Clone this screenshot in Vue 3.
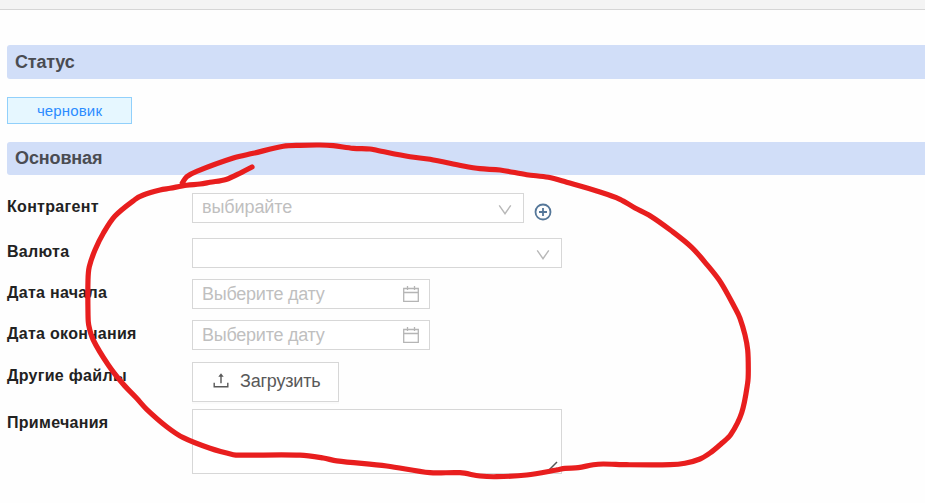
<script setup>
const strokePoints = [
  [252, 167], [241.7, 172.3], [226, 179.5], [210, 182.3], [200, 184], [186.7, 185.3], [170, 188.3],
  [160, 190], [143.3, 195], [135, 199.5], [115, 216], [103.3, 233.3], [95, 250], [89.3, 266.7],
  [88, 280], [88, 313], [88.7, 325], [93.3, 340], [108.3, 365], [123.3, 384.3], [136.7, 398.3],
  [146.7, 409.3], [166.7, 426.7], [183.3, 437.7], [210, 448.3], [233.3, 454.7], [240, 455.2],
  [300, 455.2], [323.3, 458], [336.7, 460.9], [386.7, 466], [430, 472.7], [460, 472.7],
  [480, 476], [496.7, 476.7], [526.7, 475], [556.7, 470], [565, 468.3], [578.3, 467.7],
  [593.3, 464.7], [603.3, 464], [626.7, 464.7], [670, 464.7], [685, 463.3], [700, 459],
  [710, 453], [721.7, 443.3], [730.7, 434.7], [741.7, 412.7], [747.7, 382.7], [748.3, 370],
  [747.7, 350], [745, 335], [740, 318.3], [735.7, 309.3], [720.7, 282.3], [706.7, 264.3],
  [691.7, 247.3], [671.7, 231], [650, 215.7], [635, 208], [620, 199.3], [600, 192],
  [566.7, 182.3], [548.3, 177.3], [526.7, 174.7], [500, 170], [480, 168.7], [463.3, 166],
  [430, 159.3], [410, 156.7], [376.7, 150.3], [370, 149], [353.3, 148.3], [333.3, 145.7],
  [320, 145], [300, 145.3], [283.3, 146.3], [253.3, 153.3], [233.3, 158], [196.7, 171.3],
  [186.7, 176.7], [182.3, 183],
]

// Catmull-Rom spline through the points, written as cubic segments
function smooth(pts) {
  let d = `M${pts[0][0]} ${pts[0][1]}`
  for (let i = 0; i < pts.length - 1; i++) {
    const p0 = pts[i - 1] || pts[i]
    const p1 = pts[i]
    const p2 = pts[i + 1]
    const p3 = pts[i + 2] || p2
    const len = Math.hypot(p2[0] - p1[0], p2[1] - p1[1])
    const tangent = (a, b) => {
      const l = Math.hypot(b[0] - a[0], b[1] - a[1]) || 1
      return [((b[0] - a[0]) / l) * len * 0.33, ((b[1] - a[1]) / l) * len * 0.33]
    }
    const t1 = tangent(p0, p2)
    const t2 = tangent(p1, p3)
    d += `C${p1[0] + t1[0]} ${p1[1] + t1[1]} ${p2[0] - t2[0]} ${p2[1] - t2[1]} ${p2[0]} ${p2[1]}`
  }
  return d
}
const strokePath = smooth(strokePoints)
const dates = ['Дата начала', 'Дата окончания']
</script>

<template>
  <div class="page">
    <div class="topbar"></div>
    <main class="content">
      <h2 class="section">Статус</h2>
      <span class="tag">черновик</span>
      <h2 class="section main-section">Основная</h2>

      <div class="form">
        <div class="row first">
          <label>Контрагент</label>
          <div class="field select narrow">
            <span class="placeholder choose">выбирайте</span>
            <svg class="chevron" width="14" height="12" viewBox="0 0 14 12"><path d="M1.2 1.3 7 9.7l5.8-8.4" /></svg>
          </div>
          <svg class="plus" width="18" height="18" viewBox="0 0 18 18">
            <circle cx="9" cy="9" r="7.5" /><path d="M9 5v8M5 9h8" />
          </svg>
        </div>
        <div class="row second">
          <label>Валюта</label>
          <div class="field select wide">
            <svg class="chevron" width="14" height="12" viewBox="0 0 14 12"><path d="M1.2 1.3 7 9.7l5.8-8.4" /></svg>
          </div>
        </div>
        <div v-for="name in dates" :key="name" class="row date-row">
          <label>{{ name }}</label>
          <div class="field date">
            <span class="placeholder">Выберите дату</span>
            <svg class="calendar" width="16" height="16" viewBox="0 0 16 16">
              <path d="M.7 2.5h14.6v12.8H.7zM.7 6.5h14.6M4.5 0v4M11.5 0v4" />
            </svg>
          </div>
        </div>
        <div class="row upload-row">
          <label>Другие файлы</label>
          <button class="upload">
            <svg width="16" height="16" viewBox="0 0 16 16">
              <path d="M1.2 9.8v4h13.6v-4M8 10.3V2.2" /><path class="head" d="M8 .3 5.3 3.8h5.4z" />
            </svg>
            <span>Загрузить</span>
          </button>
        </div>
        <div class="row notes-row">
          <label>Примечания</label>
          <div class="field notes">
            <svg width="12" height="12" viewBox="0 0 12 12"><path d="M2 10 10 2M8 10l2-2" /></svg>
          </div>
        </div>
      </div>
    </main>
    <svg class="marker" width="925" height="503" viewBox="0 0 925 503"><path :d="strokePath" /></svg>
  </div>
</template>

<style>
body {
  margin: 0;
  background: #fefefe;
}
</style>

<style scoped>
.page {
  position: relative;
  box-sizing: border-box;
  height: 503px;
  overflow: hidden;
  background: #fefefe;
  font-family: "Liberation Sans", Arial, sans-serif;
}
.page * {
  box-sizing: border-box;
}
svg {
  fill: none;
  flex: none;
}
.topbar {
  height: 10px;
  background: #f4f4f4;
  border-bottom: 1px solid #d6d6d6;
}
.content {
  display: flex;
  flex-direction: column;
  align-items: flex-start;
  padding: 35px 0 0 7px;
}
.section {
  width: 100%;
  height: 34px;
  margin: 0;
  padding-left: 8px;
  border-radius: 3px 0 0 3px;
  background: #d1def8;
  color: #4a4c52;
  font-size: 18px;
  font-weight: 700;
  letter-spacing: -0.2px;
  line-height: 34px;
}
.main-section {
  height: 33px;
  letter-spacing: -0.12px;
  line-height: 33px;
}
.tag {
  width: 125px;
  height: 27px;
  margin: 18px 0;
  border: 1px solid #91d0fb;
  background: #e6f7ff;
  color: #2b8cff;
  font-size: 15px;
  letter-spacing: 0.15px;
  line-height: 26px;
  text-align: center;
}
.form {
  display: flex;
  flex-direction: column;
  padding-top: 18px;
}
.row {
  display: flex;
  align-items: flex-start;
}
.row label {
  width: 185px;
  flex: none;
  color: #222;
  font-size: 16px;
  font-weight: 700;
  letter-spacing: 0.3px;
  line-height: 28px;
  white-space: nowrap;
}
.field {
  display: flex;
  align-items: center;
  justify-content: flex-end;
  height: 30px;
  border: 1px solid #d7d7d7;
  background: #fff;
}
.placeholder {
  flex: 1;
  padding-left: 9px;
  color: #bfbfbf;
  font-size: 18px;
  letter-spacing: -0.25px;
  line-height: 28px;
  white-space: nowrap;
}
.placeholder.choose {
  padding-bottom: 2px;
  letter-spacing: -0.1px;
  line-height: 26px;
}
.narrow {
  width: 332px;
}
.wide {
  width: 370px;
}
.chevron {
  margin: 4px 11px 0 0;
  stroke: #b8b8b8;
  stroke-width: 1.4;
}
.plus {
  margin: 10px 0 0 10px;
  stroke: #557799;
  stroke-width: 1.8;
}
.second {
  margin-top: 15px;
}
.date-row {
  margin-top: 11px;
}
.date {
  width: 238px;
}
.calendar {
  margin-right: 10px;
  stroke: #b5b5b5;
  stroke-width: 1.3;
}
.upload-row {
  margin-top: 12px;
}
.upload {
  display: flex;
  align-items: center;
  gap: 11px;
  width: 147px;
  height: 40px;
  padding: 0 0 2px 20px;
  border: 1px solid #d7d7d7;
  background: #fff;
  box-shadow: 0 2px 0 rgba(0, 0, 0, 0.015);
  color: #595959;
  font: 18px "Liberation Sans", Arial, sans-serif;
  letter-spacing: -0.2px;
}
.upload svg {
  margin-top: -1px;
  stroke: #595959;
  stroke-width: 1.4;
}
.upload .head {
  fill: #595959;
  stroke: none;
}
.notes-row {
  margin-top: 7px;
}
.notes {
  align-items: flex-end;
  width: 370px;
  height: 65px;
}
.notes svg {
  margin: 0 2px 1px 0;
  stroke: #555;
  stroke-width: 1.5;
}
.marker {
  position: absolute;
  inset: 0;
  pointer-events: none;
}
.marker path {
  stroke: #e81e1e;
  stroke-width: 5.2;
  stroke-linecap: round;
  stroke-linejoin: round;
}
</style>
